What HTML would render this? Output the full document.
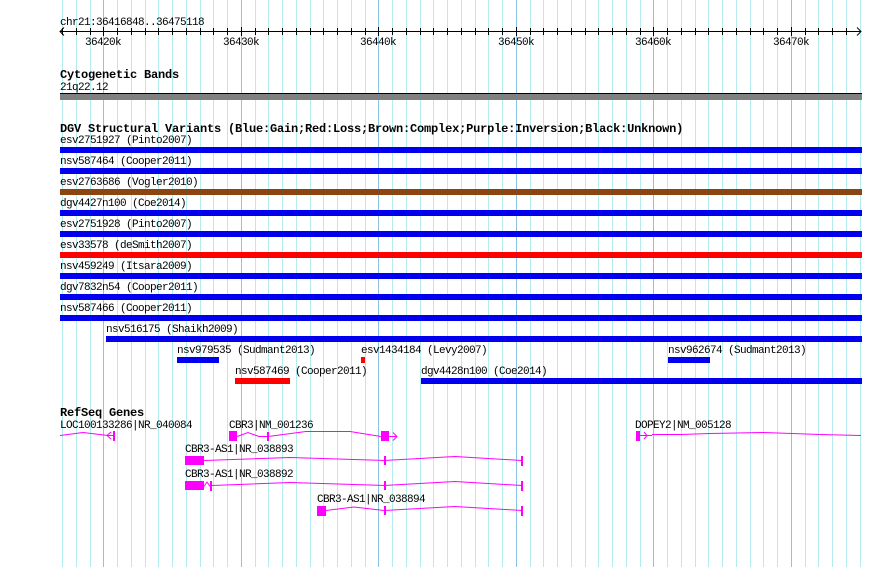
<!DOCTYPE html>
<html><head><meta charset="utf-8"><style>
html,body{margin:0;padding:0;background:#fff;width:890px;height:567px;overflow:hidden}
svg{display:block}
text{font-family:"Liberation Mono","DejaVu Sans Mono",monospace;font-size:11px;letter-spacing:-0.6px;fill:#000}
.b{font-weight:bold;font-size:12px;letter-spacing:-0.2px}
</style></head><body>
<svg width="890" height="567" xmlns="http://www.w3.org/2000/svg">
<path stroke="#b4ecf0" stroke-width="1" fill="none" d="M62.5 0V567M76.5 0V567M90.5 0V567M117.5 0V567M131.5 0V567M145.5 0V567M158.5 0V567M172.5 0V567M186.5 0V567M200.5 0V567M213.5 0V567M227.5 0V567M255.5 0V567M268.5 0V567M282.5 0V567M296.5 0V567M310.5 0V567M323.5 0V567M337.5 0V567M351.5 0V567M365.5 0V567M392.5 0V567M406.5 0V567M420.5 0V567M433.5 0V567M447.5 0V567M461.5 0V567M475.5 0V567M488.5 0V567M502.5 0V567M530.5 0V567M543.5 0V567M557.5 0V567M571.5 0V567M585.5 0V567M598.5 0V567M612.5 0V567M626.5 0V567M640.5 0V567M667.5 0V567M681.5 0V567M695.5 0V567M708.5 0V567M722.5 0V567M736.5 0V567M750.5 0V567M763.5 0V567M777.5 0V567M805.5 0V567M818.5 0V567M832.5 0V567M846.5 0V567M860.5 0V567"/>
<path stroke="#8cc4e8" stroke-width="1" fill="none" d="M103.5 0V567M241.5 0V567M378.5 0V567M516.5 0V567M653.5 0V567M791.5 0V567"/>
<path stroke="#000" stroke-width="1" fill="none" d="M62.5 28V35M76.5 28V35M90.5 28V35M117.5 28V35M131.5 28V35M145.5 28V35M158.5 28V35M172.5 28V35M186.5 28V35M200.5 28V35M213.5 28V35M227.5 28V35M255.5 28V35M268.5 28V35M282.5 28V35M296.5 28V35M310.5 28V35M323.5 28V35M337.5 28V35M351.5 28V35M365.5 28V35M392.5 28V35M406.5 28V35M420.5 28V35M433.5 28V35M447.5 28V35M461.5 28V35M475.5 28V35M488.5 28V35M502.5 28V35M530.5 28V35M543.5 28V35M557.5 28V35M571.5 28V35M585.5 28V35M598.5 28V35M612.5 28V35M626.5 28V35M640.5 28V35M667.5 28V35M681.5 28V35M695.5 28V35M708.5 28V35M722.5 28V35M736.5 28V35M750.5 28V35M763.5 28V35M777.5 28V35M805.5 28V35M818.5 28V35M832.5 28V35M846.5 28V35M103.5 27V36M241.5 27V36M378.5 27V36M516.5 27V36M653.5 27V36M791.5 27V36"/>
<text x="60" y="25">chr21:36416848..36475118</text>
<line x1="60" y1="31.5" x2="861" y2="31.5" stroke="#000"/>
<polyline points="64,27.5 60,31.5 64,35.5" fill="none" stroke="#000"/>
<polyline points="857,27.5 861,31.5 857,35.5" fill="none" stroke="#000"/>
<text x="85" y="45">36420k</text><text x="223" y="45">36430k</text><text x="360" y="45">36440k</text>
<text x="498" y="45">36450k</text><text x="635" y="45">36460k</text><text x="773" y="45">36470k</text>

<text class="b" x="60" y="78">Cytogenetic Bands</text>
<text x="60" y="90">21q22.12</text>
<rect x="60" y="93" width="802" height="7" fill="#808080"/>
<rect x="60" y="93" width="802" height="1" fill="#000"/>

<text class="b" x="60" y="132">DGV Structural Variants (Blue:Gain;Red:Loss;Brown:Complex;Purple:Inversion;Black:Unknown)</text>
<text x="60" y="143">esv2751927 (Pinto2007)</text><rect x="60" y="147" width="802" height="6" fill="#0000ee"/>
<text x="60" y="164">nsv587464 (Cooper2011)</text><rect x="60" y="168" width="802" height="6" fill="#0000ee"/>
<text x="60" y="185">esv2763686 (Vogler2010)</text><rect x="60" y="189" width="802" height="6" fill="#8b4513"/>
<text x="60" y="206">dgv4427n100 (Coe2014)</text><rect x="60" y="210" width="802" height="6" fill="#0000ee"/>
<text x="60" y="227">esv2751928 (Pinto2007)</text><rect x="60" y="231" width="802" height="6" fill="#0000ee"/>
<text x="60" y="248">esv33578 (deSmith2007)</text><rect x="60" y="252" width="802" height="6" fill="#ff0000"/>
<text x="60" y="269">nsv459249 (Itsara2009)</text><rect x="60" y="273" width="802" height="6" fill="#0000ee"/>
<text x="60" y="290">dgv7832n54 (Cooper2011)</text><rect x="60" y="294" width="802" height="6" fill="#0000ee"/>
<text x="60" y="311">nsv587466 (Cooper2011)</text><rect x="60" y="315" width="802" height="6" fill="#0000ee"/>
<text x="106" y="332">nsv516175 (Shaikh2009)</text><rect x="106" y="336" width="756" height="6" fill="#0000ee"/>
<text x="177" y="353">nsv979535 (Sudmant2013)</text><rect x="177" y="357" width="42" height="6" fill="#0000ee"/>
<text x="361" y="353">esv1434184 (Levy2007)</text><rect x="361" y="357" width="4" height="6" fill="#ff0000"/>
<text x="668" y="353">nsv962674 (Sudmant2013)</text><rect x="668" y="357" width="42" height="6" fill="#0000ee"/>
<text x="235" y="374">nsv587469 (Cooper2011)</text><rect x="235" y="378" width="55" height="6" fill="#ff0000"/>
<text x="421" y="374">dgv4428n100 (Coe2014)</text><rect x="421" y="378" width="441" height="6" fill="#0000ee"/>

<text class="b" x="60" y="416">RefSeq Genes</text>
<text x="60" y="428">LOC100133286|NR_040084</text>
<text x="229" y="428">CBR3|NM_001236</text>
<text x="185" y="452">CBR3-AS1|NR_038893</text>
<text x="185" y="477">CBR3-AS1|NR_038892</text>
<text x="317" y="502">CBR3-AS1|NR_038894</text>
<text x="635" y="428">DOPEY2|NM_005128</text>
<g fill="#ff00ff" stroke="#ff00ff">
<polyline points="60,435.5 83,432.5 108,435.5" fill="none"/>
<polyline points="111,432 107,435.5 111,439" fill="none"/>
<line x1="107" y1="435.5" x2="113" y2="435.5"/>
<rect x="113" y="431" width="2" height="10" stroke="none"/>

<rect x="229" y="431" width="8" height="10" stroke="none"/>
<polyline points="237,436.5 248,432.5 259,436.5 268,436.5 306,431.5 350,431.5 381,436.5" fill="none"/>
<rect x="267" y="432" width="2" height="9" stroke="none"/>
<rect x="381" y="431" width="8" height="10" stroke="none"/>
<polyline points="389,436.5 397,436.5" fill="none"/>
<polyline points="393,432.5 397,436.5 393,440.5" fill="none"/>

<rect x="185" y="456" width="19" height="9" stroke="none"/>
<polyline points="204,460.5 290,457.5 384,460.5 455,456.5 522,460.5" fill="none"/>
<rect x="384" y="456" width="2" height="9" stroke="none"/>
<rect x="521" y="456" width="2" height="10" stroke="none"/>

<rect x="185" y="481" width="19" height="9" stroke="none"/>
<polyline points="204,486.5 207,482 210,486.5" fill="none"/>
<rect x="210" y="481" width="2" height="10" stroke="none"/>
<polyline points="212,485.5 290,482.5 384,485.5 455,481.5 522,485.5" fill="none"/>
<rect x="384" y="481" width="2" height="9" stroke="none"/>
<rect x="521" y="481" width="2" height="10" stroke="none"/>

<rect x="317" y="506" width="9" height="10" stroke="none"/>
<polyline points="326,510.5 354,507 384,510.5 455,506.5 522,510.5" fill="none"/>
<rect x="384" y="506" width="2" height="9" stroke="none"/>
<rect x="521" y="506" width="2" height="10" stroke="none"/>

<rect x="636" y="431" width="4" height="10" stroke="none"/>
<polyline points="640,435.5 652,435.5" fill="none"/>
<polyline points="644,432 647,435.5 644,439" fill="none"/>
<polyline points="652,434.5 681,434.5 710,433.5 763,432.5 792,433.5 820,434.5 861,435.5" fill="none"/>
</g>
</svg>
</body></html>
